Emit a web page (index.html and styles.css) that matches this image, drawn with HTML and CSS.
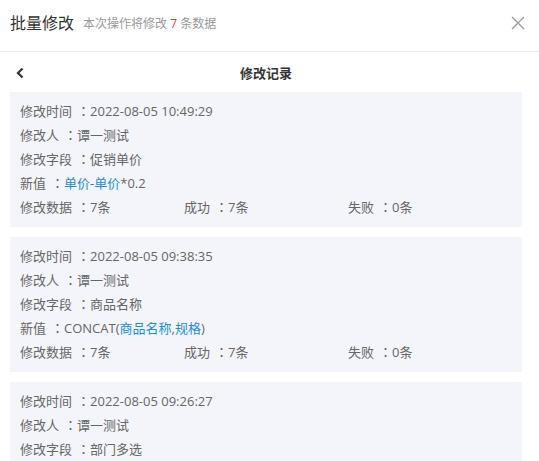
FILE: index.html
```html
<!DOCTYPE html>
<html lang="zh-CN">
<head>
<meta charset="utf-8">
<link rel="stylesheet" href="styles.css">
</head>
<body>
<div class="dialog">
  <div class="header">
    <span class="title">批量修改</span>
    <span class="sub">本次操作将修改 <em class="num">7</em> 条数据</span>
    <svg class="close" width="14" height="14" viewBox="0 0 14 14"><path d="M1 1L13 13M13 1L1 13" stroke="#999" stroke-width="1.3" fill="none"/></svg>
  </div>
  <div class="nav">
    <svg class="back" width="10" height="12" viewBox="0 0 10 12"><path d="M7.5 1.5L3 6l4.5 4.5" stroke="#333" stroke-width="2.2" fill="none"/></svg>
    <span class="navtitle">修改记录</span>
  </div>
  <div class="list">
    <div class="card">
      <div class="line">修改时间<span class="c" lang="zh-TW">：</span>2022-08-05 10:49:29</div>
      <div class="line">修改人<span class="c" lang="zh-TW">：</span>谭一测试</div>
      <div class="line">修改字段<span class="c" lang="zh-TW">：</span>促销单价</div>
      <div class="line">新值<span class="c" lang="zh-TW">：</span><span class="hl">单价</span>-<span class="hl">单价</span>*0.2</div>
      <div class="line stats"><span>修改数据<span class="c" lang="zh-TW">：</span>7条</span><span>成功<span class="c" lang="zh-TW">：</span>7条</span><span>失败<span class="c" lang="zh-TW">：</span>0条</span></div>
    </div>
    <div class="card">
      <div class="line">修改时间<span class="c" lang="zh-TW">：</span>2022-08-05 09:38:35</div>
      <div class="line">修改人<span class="c" lang="zh-TW">：</span>谭一测试</div>
      <div class="line">修改字段<span class="c" lang="zh-TW">：</span>商品名称</div>
      <div class="line">新值<span class="c" lang="zh-TW">：</span>CONCAT(<span class="hl">商品名称</span>,<span class="hl">规格</span>)</div>
      <div class="line stats"><span>修改数据<span class="c" lang="zh-TW">：</span>7条</span><span>成功<span class="c" lang="zh-TW">：</span>7条</span><span>失败<span class="c" lang="zh-TW">：</span>0条</span></div>
    </div>
    <div class="card last">
      <div class="line">修改时间<span class="c" lang="zh-TW">：</span>2022-08-05 09:26:27</div>
      <div class="line">修改人<span class="c" lang="zh-TW">：</span>谭一测试</div>
      <div class="line">修改字段<span class="c" lang="zh-TW">：</span>部门多选</div>
    </div>
  </div>
</div>
</body>
</html>
```
FILE: styles.css
```css
html, body {
  margin: 0;
  padding: 0;
  background: #fff;
  overflow: hidden;
}
body {
  font-family: "Open Sans", "Noto Sans CJK SC", sans-serif;
  color: #333;
}
.dialog {
  width: 539px;
  height: 461px;
  overflow: hidden;
}
.header {
  height: 52px;
  border-bottom: 1px solid #ebebeb;
  display: flex;
  align-items: center;
  padding: 0 12px 6px 10px;
  box-sizing: border-box;
}
.title {
  font-size: 16px;
  color: #333;
  line-height: 20px;
}
.sub {
  font-size: 12px;
  color: #999;
  margin-left: 9px;
  margin-top: 1px;
}
.num {
  font-style: normal;
  color: #e4393c;
}
.close {
  margin-left: auto;
  margin-right: 2px;
}
.nav {
  height: 40px;
  display: flex;
  align-items: center;
  justify-content: center;
  position: relative;
  padding: 0 17px 0 10px;
}
.back {
  position: absolute;
  left: 15px;
  top: 15px;
}
.navtitle {
  font-size: 13px;
  font-weight: bold;
  color: #333;
}
.list {
  display: flex;
  flex-direction: column;
  gap: 10px;
  padding: 0 17px 0 10px;
}
.card {
  background: #f4f5fa;
  padding: 7px 10px 8px;
}
.card.last {
  padding-bottom: 20px;
}
.line {
  font-size: 13px;
  line-height: 24px;
  color: #666;
  white-space: nowrap;
}
.c {
  font-family: "Noto Sans CJK TC", "Noto Sans CJK SC", sans-serif;
  margin-left: 5px;
}
.hl {
  color: #1a8fd8;
}
.stats {
  display: grid;
  grid-template-columns: 164px 164px 1fr;
}
```
